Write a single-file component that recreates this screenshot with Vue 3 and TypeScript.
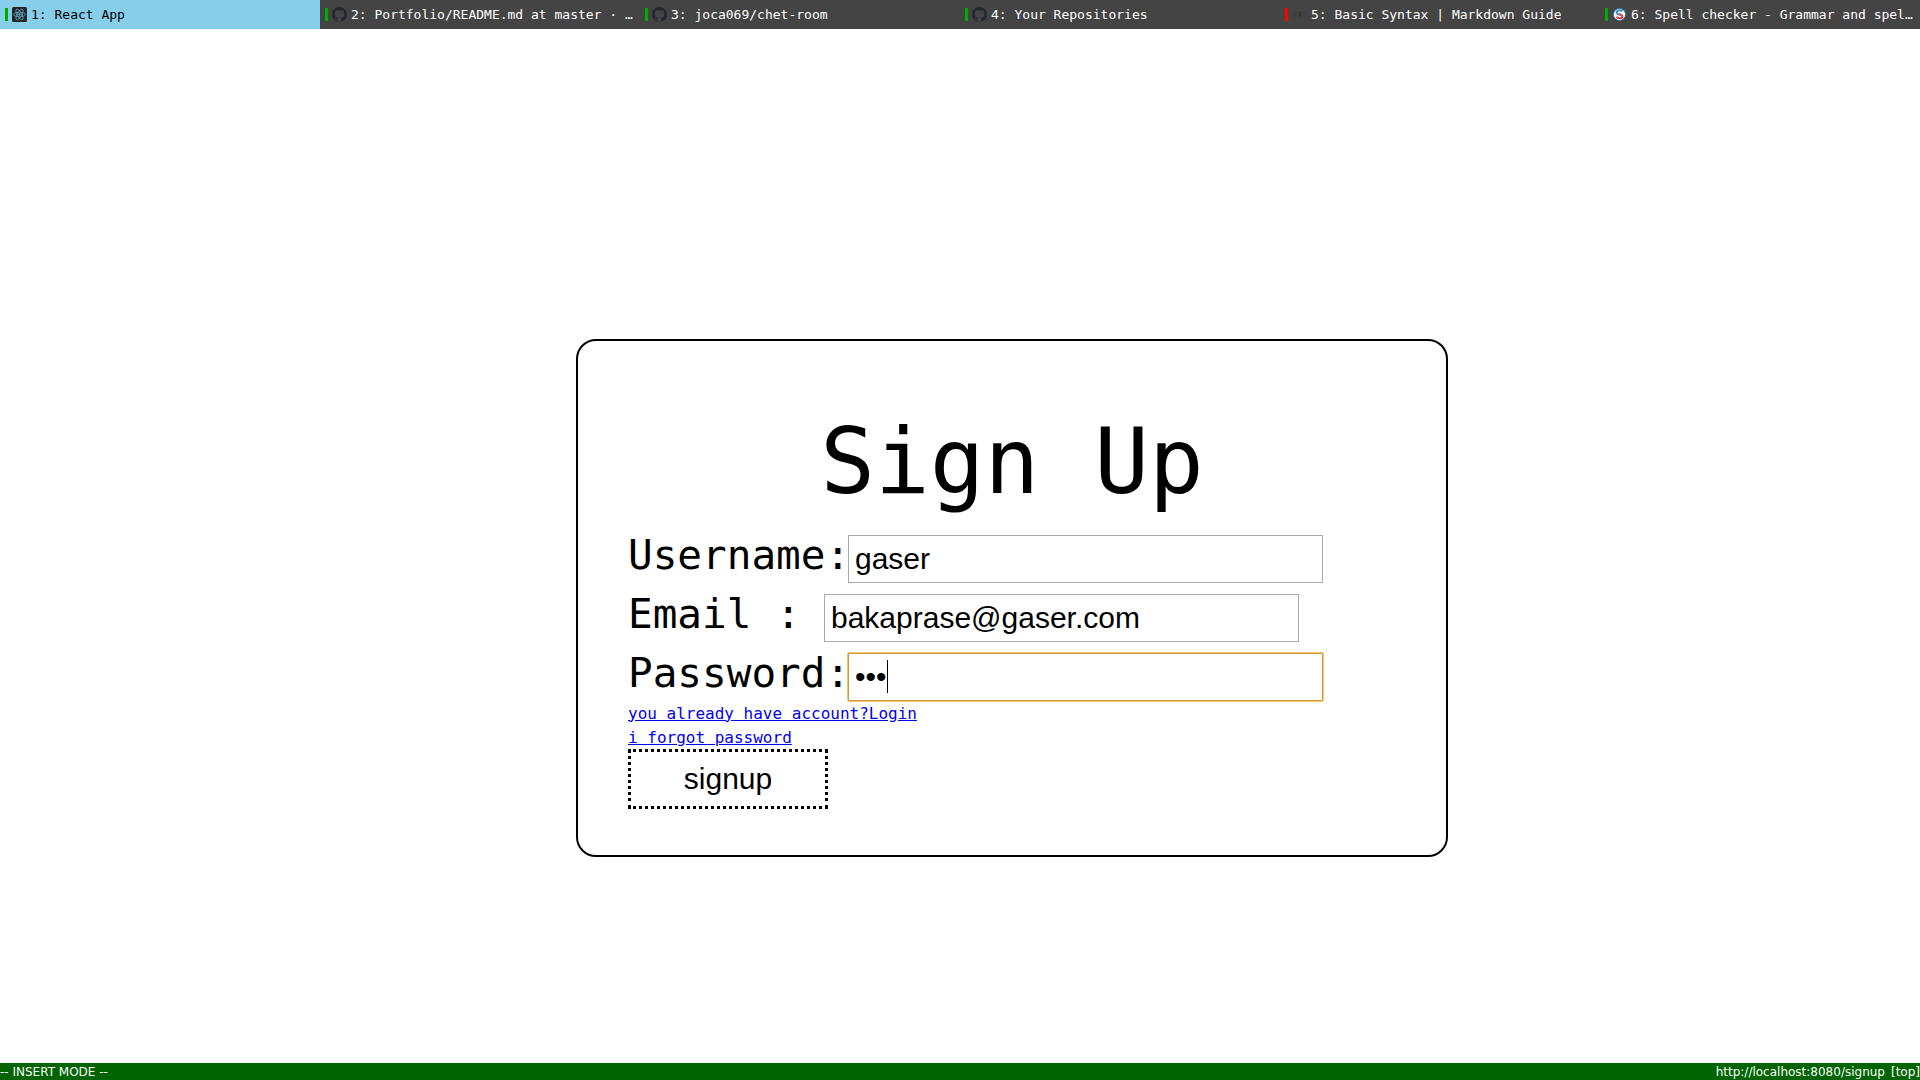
<script setup lang="ts">
import { ref } from 'vue'

type Icon = 'react' | 'github' | 'markdown' | 'spell'

interface Tab {
  id: number
  title: string
  icon: Icon
  failed?: boolean
}

const tabs: Tab[] = [
  { id: 1, title: 'React App', icon: 'react' },
  { id: 2, title: 'Portfolio/README.md at master · …', icon: 'github' },
  { id: 3, title: 'joca069/chet-room', icon: 'github' },
  { id: 4, title: 'Your Repositories', icon: 'github' },
  { id: 5, title: 'Basic Syntax | Markdown Guide', icon: 'markdown', failed: true },
  { id: 6, title: 'Spell checker - Grammar and spel…', icon: 'spell' },
]

const activeTab = ref(1)
const username = ref('gaser')
const email = ref('bakaprase@gaser.com')
const password = ref('abc')
</script>

<template>
  <div class="window">
    <nav class="tabs">
      <a
        v-for="tab in tabs"
        :key="tab.id"
        href="#"
        class="tab"
        :class="{ active: tab.id === activeTab }"
        @click.prevent="activeTab = tab.id"
      >
        <span class="indicator" :class="{ failed: tab.failed }"></span>
        <svg v-if="tab.icon === 'react'" class="icon" viewBox="0 0 30 30" aria-hidden="true">
          <rect width="30" height="30" rx="3" fill="#20232a" />
          <g fill="none" stroke="#61a9bf" stroke-width="1.6">
            <ellipse cx="15" cy="15" rx="12" ry="4.6" />
            <ellipse cx="15" cy="15" rx="12" ry="4.6" transform="rotate(60 15 15)" />
            <ellipse cx="15" cy="15" rx="12" ry="4.6" transform="rotate(120 15 15)" />
          </g>
          <circle cx="15" cy="15" r="2.4" fill="#61a9bf" />
        </svg>
        <svg v-else-if="tab.icon === 'github'" class="icon" viewBox="0 0 16 16" aria-hidden="true">
          <path
            fill="#24292e"
            d="M8 0C3.58 0 0 3.58 0 8c0 3.54 2.29 6.53 5.47 7.59.4.07.55-.17.55-.38 0-.19-.01-.82-.01-1.49-2.01.37-2.53-.49-2.69-.94-.09-.23-.48-.94-.82-1.13-.28-.15-.68-.52-.01-.53.63-.01 1.08.58 1.23.82.72 1.21 1.87.87 2.33.66.07-.52.28-.87.51-1.07-1.78-.2-3.64-.89-3.64-3.95 0-.87.31-1.59.82-2.15-.08-.2-.36-1.02.08-2.12 0 0 .67-.21 2.2.82.64-.18 1.32-.27 2-.27s1.36.09 2 .27c1.53-1.04 2.2-.82 2.2-.82.44 1.1.16 1.92.08 2.12.51.56.82 1.27.82 2.15 0 3.07-1.87 3.75-3.65 3.95.29.25.54.73.54 1.48 0 1.07-.01 1.93-.01 2.2 0 .21.15.46.55.38A8.01 8.01 0 0 0 16 8c0-4.42-3.58-8-8-8z"
          />
        </svg>
        <svg v-else-if="tab.icon === 'markdown'" class="icon" viewBox="0 0 15 15" aria-hidden="true">
          <rect x="1" y="4" width="13" height="8" rx="1" fill="#414141" />
          <path d="M7 5h2v3h1L8 10 6 8h1z" fill="#333" />
        </svg>
        <svg v-else class="icon" viewBox="0 0 15 15" aria-hidden="true">
          <circle cx="7.5" cy="7.5" r="6" fill="#fff" stroke="#2878b0" stroke-width="1" />
          <path d="M10.5 4.3C8.4 2.6 4.6 3.3 4.7 5.5c0 1.6 1.5 1.9 3 2.3" fill="none" stroke="#3b8fc8" stroke-width="2" />
          <path d="M7.3 7.3c1.7.4 3 .7 3 2.1 0 2-3.7 2.5-5.8.5" fill="none" stroke="#e0333c" stroke-width="2" />
        </svg>
        <span class="title">{{ tab.id }}: {{ tab.title }}</span>
      </a>
    </nav>

    <main class="page">
      <form class="card" @submit.prevent>
        <h1>Sign Up</h1>
        <div class="row">
          <label for="username">Username:</label>
          <input id="username" v-model="username" type="text" autocomplete="off" />
        </div>
        <div class="row">
          <label for="email" class="short">Email :</label>
          <input id="email" v-model="email" type="text" autocomplete="off" />
        </div>
        <div class="row">
          <label for="password">Password:</label>
          <div class="field">
            <input id="password" v-model="password" class="focused" type="password" autocomplete="off" />
            <span class="caret"></span>
          </div>
        </div>
        <a class="link" href="#">you already have account?Login</a>
        <a class="link" href="#">i forgot password</a>
        <button type="submit">signup</button>
      </form>
    </main>

    <footer class="status">
      <span>-- INSERT MODE --</span>
      <span class="location"><span>http://localhost:8080/signup</span><span>[top]</span></span>
    </footer>
  </div>
</template>

<style>
body {
  background: #fff;
}
</style>

<style scoped>
.window {
  display: flex;
  flex-direction: column;
  min-height: 100vh;
}

.tabs {
  display: flex;
  background: #444;
}

.tab {
  display: flex;
  flex: 1 1 0;
  align-items: center;
  gap: 4px;
  box-sizing: border-box;
  min-width: 0;
  height: 29px;
  padding: 0 5px;
  background: #444;
  color: #fff;
  font: 13px/15px "DejaVu Sans Mono", monospace;
  text-decoration: none;
}

.tab.active {
  background: #87ceeb;
  color: #000;
}

.indicator {
  flex: none;
  width: 3px;
  height: 13px;
  background: #0a0;
}

.indicator.failed {
  background: #f00;
}

.icon {
  flex: none;
  width: 15px;
  height: 15px;
}

.title {
  min-width: 0;
  overflow: hidden;
  text-overflow: ellipsis;
  white-space: nowrap;
}

.page {
  display: grid;
  flex: 1;
  grid-template-rows: 3fr auto 2fr;
}

.card {
  display: flex;
  grid-row: 2;
  flex-direction: column;
  align-items: flex-start;
  width: 40%;
  margin-left: 30%;
  padding: 50px 50px 46px;
  border: 2px solid #000;
  border-radius: 20px;
  font-family: "DejaVu Sans Mono", monospace;
  color: #000;
}

h1 {
  align-self: center;
  margin: 0;
  padding-top: 8px;
  font-size: 91px;
  font-weight: 400;
  line-height: 125px;
}

.row {
  display: flex;
  align-items: baseline;
  box-sizing: border-box;
  height: 59px;
  padding-top: 7px;
}

label {
  flex: none;
  width: 220px;
  font-size: 41px;
  line-height: 48px;
  white-space: nowrap;
}

label.short {
  width: 196px;
}

input {
  box-sizing: border-box;
  width: 475px;
  height: 48px;
  margin: 0;
  padding: 0 6px;
  border: 1px solid #a9a9a9;
  outline: none;
  background: #fff;
  color: #000;
  font: 30px/34px "Liberation Sans", Arial, sans-serif;
}

.field {
  position: relative;
}

input.focused {
  border-color: #cf9a3e;
  border-radius: 1px;
  box-shadow: 0 0 0 1px #f0c674;
}

.caret {
  position: absolute;
  top: 7px;
  left: 39px;
  width: 1px;
  height: 33px;
  background: #000;
}

.link {
  padding-top: 2px;
  color: #00e;
  font-size: 16px;
  line-height: 22px;
  text-decoration: underline;
}

button {
  width: 200px;
  height: 60px;
  padding: 0;
  border: 3px dotted #000;
  background: #fff;
  color: #000;
  font: 30px/34px "Liberation Sans", Arial, sans-serif;
}

.status {
  display: flex;
  justify-content: space-between;
  padding-top: 2px;
  background: #006400;
  color: #fff;
  font: 12px/15px "DejaVu Sans", sans-serif;
}

.location {
  display: flex;
  gap: 6px;
}
</style>
